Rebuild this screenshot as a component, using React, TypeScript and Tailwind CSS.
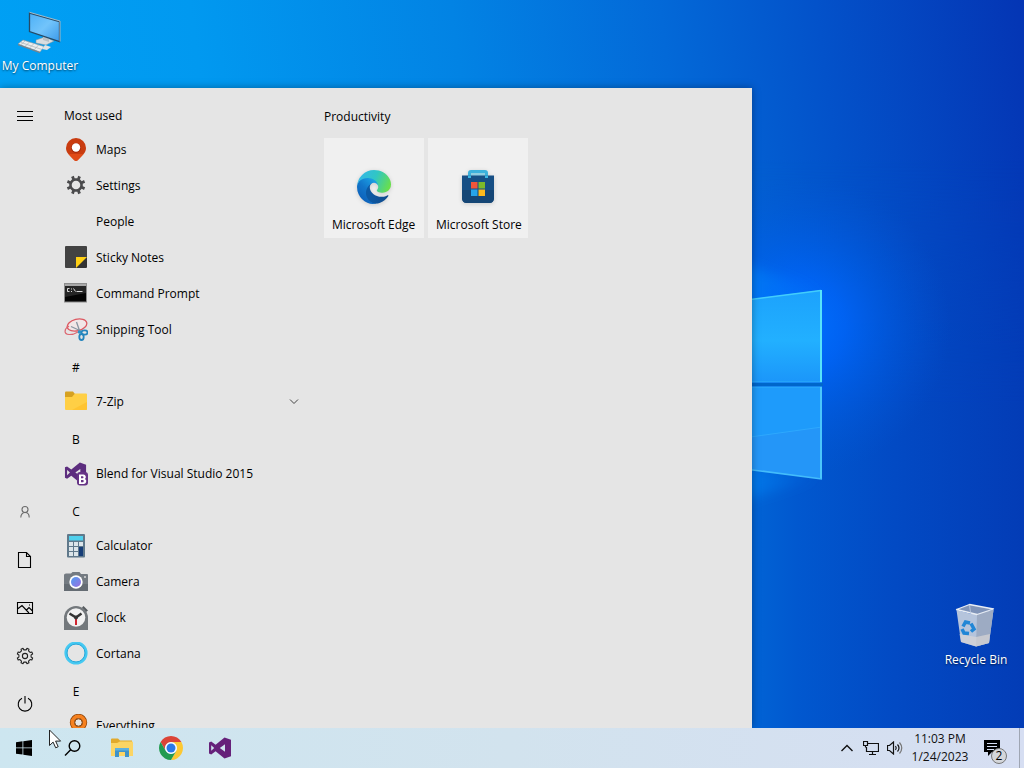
import type { ReactNode } from 'react';

/* ---------- helpers ---------- */

function gearPath(cx: number, cy: number, outer: number, inner: number, teeth: number, tip: number, root: number) {
  const points: string[] = [];
  const step = (Math.PI * 2) / teeth;
  for (let i = 0; i < teeth; i++) {
    const a = i * step + step / 2;
    const corners: [number, number][] = [
      [a - step * root, inner],
      [a - step * tip, outer],
      [a + step * tip, outer],
      [a + step * root, inner],
    ];
    for (const [angle, r] of corners) {
      points.push(`${(cx + Math.cos(angle) * r).toFixed(2)} ${(cy + Math.sin(angle) * r).toFixed(2)}`);
    }
  }
  return `M${points.join('L')}Z`;
}

const VS_PATH =
  'M16.500 .5 23 3v18l-6.500 2.500L7.600 15.600 3.200 19 1 18V6l2.200-1L7.600 8.400Z M17 8 11.800 12l5.200 4Z M3.200 9v6L6.200 12Z';

/* ---------- wallpaper ---------- */

function Wallpaper() {
  return (
    <svg
      className="absolute inset-0 size-full"
      viewBox="0 0 1024 768"
      preserveAspectRatio="xMaxYMin slice"
      aria-hidden="true"
    >
      <defs>
        <linearGradient id="sky" gradientUnits="userSpaceOnUse" x1="0" y1="140" x2="1024" y2="0">
          <stop offset="0" stopColor="#00a0f4" />
          <stop offset="0.2" stopColor="#0199f0" />
          <stop offset="0.45" stopColor="#0283e4" />
          <stop offset="0.65" stopColor="#0369d8" />
          <stop offset="0.8" stopColor="#0352ca" />
          <stop offset="1" stopColor="#0435b4" />
        </linearGradient>
        <linearGradient id="lower" x1="0" y1="0" x2="1" y2="0">
          <stop offset="0" stopColor="#0170dc" />
          <stop offset="0.3" stopColor="#0158cf" />
          <stop offset="0.6" stopColor="#024ac4" />
          <stop offset="1" stopColor="#033cb6" />
        </linearGradient>
        <linearGradient id="lowerFade" x1="0" y1="0" x2="0" y2="1">
          <stop offset="0" stopColor="#fff" stopOpacity="0" />
          <stop offset="0.4" stopColor="#fff" />
        </linearGradient>
        <mask id="lowerMask">
          <rect x="700" y="160" width="324" height="608" fill="url(#lowerFade)" />
        </mask>
        <radialGradient id="glow" gradientUnits="userSpaceOnUse" cx="800" cy="325" r="150">
          <stop offset="0" stopColor="#0070ff" />
          <stop offset="0.3" stopColor="#0066fb" stopOpacity="0.8" />
          <stop offset="1" stopColor="#0058d8" stopOpacity="0" />
        </radialGradient>
        <linearGradient id="ray" x1="0" y1="0" x2="1" y2="0">
          <stop offset="0" stopColor="#0298fb" stopOpacity="0.8" />
          <stop offset="1" stopColor="#0080ff" stopOpacity="0" />
        </linearGradient>
        <linearGradient id="paneTop" x1="0" y1="0" x2="0" y2="1">
          <stop offset="0" stopColor="#1ca2fc" />
          <stop offset="0.55" stopColor="#22b0ff" />
          <stop offset="1" stopColor="#1b96fa" />
        </linearGradient>
        <filter id="soft">
          <feGaussianBlur stdDeviation="6" />
        </filter>
      </defs>
      <rect width="1024" height="768" fill="url(#sky)" />
      <rect x="700" y="160" width="324" height="608" fill="url(#lower)" mask="url(#lowerMask)" />
      <rect x="640" y="165" width="330" height="330" fill="url(#glow)" />
      <path d="M700 250 822 290 822 300 700 310Z" fill="url(#ray)" filter="url(#soft)" />
      <path d="M700 455 822 478 700 512Z" fill="url(#ray)" filter="url(#soft)" />
      <path d="M700 306 822 290V382H700Z" fill="url(#paneTop)" />
      <path d="M700 387H822V479L700 463Z" fill="#1e9bfb" />
      <path d="M700 444 822 427V479L700 463Z" fill="#2496f8" />
      <path d="M700 444 822 427" stroke="#2ea8fd" strokeWidth="1" />
      <path d="M700 382H822M700 387H822" stroke="#2fb0fb" strokeWidth="1" />
      <rect x="700" y="383" width="123" height="3" fill="#0066cb" />
      <path d="M700 306 821 290.500" fill="none" stroke="#42cdfb" strokeWidth="1.500" />
      <path d="M821 290V382" stroke="#57e3fa" strokeWidth="2" />
      <path d="M821 387V479" stroke="#4bc6fb" strokeWidth="2" />
      <path d="M700 463 822 479" stroke="#43bcfb" strokeWidth="1.500" />
    </svg>
  );
}

/* ---------- application icons (24 × 24) ---------- */

function AppIcon({ children }: { children: ReactNode }) {
  return (
    <svg width="24" height="24" viewBox="0 0 24 24" aria-hidden="true">
      {children}
    </svg>
  );
}

const MapsIcon = () => (
  <AppIcon>
    <path d="M12 0a10 10 0 0 0-10 10c0 5 3.500 7 8.300 12.200q1.700 1.600 3.400 0C18.500 17 22 15 22 10A10 10 0 0 0 12 0Z" fill="#c93c10" />
    <path d="M4.500 16c1.500 2 3.500 3.700 5.800 6.200q1.700 1.600 3.400 0c2.300-2.500 4.300-4.200 5.800-6.200Z" fill="#e04b18" />
    <circle cx="12" cy="10" r="5" fill="#a92c0c" />
    <circle cx="12" cy="9.500" r="4.200" fill="#fff" />
  </AppIcon>
);

const SettingsAppIcon = () => (
  <AppIcon>
    <path
      fillRule="evenodd"
      d={`${gearPath(12, 11, 9.4, 6.9, 8, 0.2, 0.25)}M12 6.700a4.300 4.300 0 1 0 0 8.600a4.300 4.300 0 1 0 0-8.600Z`}
      fill="#4a4a4c"
    />
  </AppIcon>
);

const StickyNotesIcon = () => (
  <AppIcon>
    <path d="M2 0h20q1 0 1 1v10L12 22H2q-1 0-1-1V1q0-1 1-1Z" fill="#424242" />
    <path d="M12 11h11v10q0 1-1 1H12Z" fill="#333" />
    <path d="M12 11h11L12 22Z" fill="#ffd014" />
  </AppIcon>
);

const CommandPromptIcon = () => (
  <AppIcon>
    <rect x="0.500" y="1.500" width="22" height="18.500" fill="#050505" stroke="#8d8d8d" />
    <rect x="1" y="2" width="21" height="2" fill="#a9a9a9" />
    <path d="M1 4h21v7L1 15Z" fill="#262626" />
    <path d="M5.500 6.500H3.500v3h2M7.500 6.500v1M7.500 9v1M9.500 6.500l2 3M12.500 9.500h6" fill="none" stroke="#eee" strokeWidth="0.900" />
  </AppIcon>
);

const SnippingToolIcon = () => (
  <AppIcon>
    <ellipse cx="13" cy="7" rx="10" ry="5.800" transform="rotate(-14 13 7)" fill="#f1e6e7" stroke="#dc5861" strokeWidth="1.300" />
    <path d="M5 8c-5 3-5.500 8 0 8.500 3 .2 6-.8 9-2.600" fill="none" stroke="#dc6670" strokeWidth="1.200" />
    <path d="M12.500 4 16 14M7 8.500l11 5" stroke="#8995a2" strokeWidth="1.300" />
    <ellipse cx="20.500" cy="14.500" rx="3" ry="2.200" fill="none" stroke="#2585bd" strokeWidth="1.800" />
    <ellipse cx="17.500" cy="19" rx="2.200" ry="3" fill="none" stroke="#2585bd" strokeWidth="1.800" />
    <circle cx="15.500" cy="14" r="1.800" fill="#2a93c9" />
  </AppIcon>
);

const FolderIcon = () => (
  <AppIcon>
    <path d="M1 2.500q0-1 1-1h7l2 2.500v4H1Z" fill="#d6a121" />
    <path d="M11 3.500h11q1 0 1 1V19q0 1-1 1H2q-1 0-1-1V7h7Z" fill="#ffcf45" />
    <path d="M23 12v7q0 1-1 1H8Z" fill="#ffc431" />
  </AppIcon>
);

const BlendIcon = () => (
  <AppIcon>
    <g transform="translate(0 0) scale(.96 .88)">
      <path fillRule="evenodd" d={VS_PATH} fill="#5c2d7e" />
    </g>
    <rect x="13" y="10" width="11" height="13.500" rx="3" fill="#663486" />
    <path fillRule="evenodd" d="M15 12.500h4.500a2.600 2.600 0 0 1 1.500 4.500 2.700 2.700 0 0 1-1.500 5H15ZM17 14.200v2h2q1.200-1 0-2ZM17 18v2.200h2.200q1.300-1.100 0-2.200Z" fill="#fff" />
  </AppIcon>
);

const CalculatorIcon = () => (
  <AppIcon>
    <rect x="3" y="0" width="18" height="23.500" rx="1" fill="#60798b" />
    <rect x="5" y="2" width="14" height="4.500" fill="#4fd0ed" />
    {[8, 13, 18].map((y) => (
      <g key={y} fill="#dce5ea">
        <rect x="5" y={y} width="4" height="4" />
        <rect x="10" y={y} width="4" height="4" />
      </g>
    ))}
    <rect x="15" y="8" width="4" height="4" fill="#dce5ea" />
    <rect x="15" y="13" width="4" height="9" fill="#163d77" />
  </AppIcon>
);

const CameraIcon = () => (
  <AppIcon>
    <defs>
      <linearGradient id="lens" x1="0" y1="0" x2="1" y2="1">
        <stop offset="0" stopColor="#4f9ef2" />
        <stop offset="1" stopColor="#9c6fe0" />
      </linearGradient>
    </defs>
    <path d="M2 3.500h5L8.500 2h7L17 4h6q1 0 1 1v16H0V5q0-1.500 2-1.500Z" fill="#747b82" />
    <path d="M0 14h24v7H0Z" fill="#656c73" />
    <circle cx="12" cy="12" r="6.700" fill="#fff" />
    <circle cx="12" cy="12" r="5" fill="url(#lens)" />
    <circle cx="21" cy="7" r="1" fill="#dadada" />
  </AppIcon>
);

const ClockIcon = () => (
  <AppIcon>
    <path d="m18 1.500 1.500-1.500L24 4.500 22 6Z" fill="#555a5e" />
    <path d="M12 0a12 12 0 0 0-12 12v12h24V12A12 12 0 0 0 12 0Z" fill="#73787c" />
    <circle cx="12" cy="11.500" r="9.300" fill="#f1f1f1" />
    <path d="m5.500 7.500 6.500 4 5.500-4" fill="none" stroke="#333" strokeWidth="2.500" />
    <path d="M12 12v7" stroke="#cf2430" strokeWidth="2" />
    <circle cx="12" cy="11.500" r="2" fill="#333" />
  </AppIcon>
);

const CortanaIcon = () => (
  <AppIcon>
    <circle cx="12" cy="11" r="10.200" fill="none" stroke="#45c9f2" strokeWidth="2.800" />
    <circle cx="12" cy="11" r="9" fill="none" stroke="#2ba7d8" strokeWidth="1" />
  </AppIcon>
);

const EverythingIcon = () => (
  <AppIcon>
    <circle cx="14.500" cy="8.500" r="6.200" fill="none" stroke="#8f480e" strokeWidth="5" />
    <circle cx="14.500" cy="8.500" r="6.200" fill="none" stroke="#f6811f" strokeWidth="3.500" />
    <circle cx="14.500" cy="8.500" r="3.700" fill="#e5e5e5" stroke="#8f480e" />
    <path d="m9 14.500-7 7" stroke="#f6811f" strokeWidth="4" />
  </AppIcon>
);

const EdgeIcon = () => (
  <svg className="drop-shadow-sm" width="34" height="34" viewBox="0 0 256 256" aria-hidden="true">
    <defs>
      <linearGradient id="edgeA" x1="0.200" y1="0.700" x2="1" y2="0.700">
        <stop offset="0" stopColor="#0c59a4" />
        <stop offset="1" stopColor="#114a8b" />
      </linearGradient>
      <linearGradient id="edgeB" x1="0.800" y1="0.200" x2="0.300" y2="0.900">
        <stop offset="0" stopColor="#1b9de2" />
        <stop offset="0.500" stopColor="#1276ca" />
        <stop offset="1" stopColor="#0d62bb" />
      </linearGradient>
      <linearGradient id="edgeC" x1="0" y1="0.300" x2="1" y2="0.600">
        <stop offset="0" stopColor="#35b7e8" />
        <stop offset="0.500" stopColor="#30c6c5" />
        <stop offset="1" stopColor="#6adf4b" />
      </linearGradient>
    </defs>
    <path fill="url(#edgeA)" d="M231 190.500c-3.400 1.800-6.900 3.400-10.500 4.700a101.500 101.500 0 0 1-35.900 6.500c-47.300 0-88.500-32.500-88.500-74.300a31.500 31.500 0 0 1 16.400-27.300c-42.800 1.800-53.800 46.400-53.800 72.500 0 74 68.100 81.400 82.800 81.400 7.900 0 19.800-2.300 27-4.600l1.300-.4a128.300 128.300 0 0 0 66.600-52.800 4 4 0 0 0-5.400-5.700z" />
    <path fill="url(#edgeB)" d="M105.700 241.400a79.200 79.200 0 0 1-22.700-21.300 80.700 80.700 0 0 1 29.500-120c3.200-1.500 8.500-4.100 15.600-4a32.400 32.400 0 0 1 25.700 13 31.900 31.900 0 0 1 6.300 18.700c0-.2 24.500-79.600-80-79.600-43.900 0-80 41.600-80 78.200a130.200 130.200 0 0 0 12.100 56 128 128 0 0 0 156.400 67 75.500 75.500 0 0 1-62.800-8z" />
    <path fill="url(#edgeC)" d="M152.300 148.900c-.8 1-3.300 2.500-3.300 5.700 0 2.600 1.700 5.100 4.700 7.200 14.400 10 41.500 8.700 41.600 8.700a59.600 59.600 0 0 0 30.300-8.300 61.400 61.400 0 0 0 30.400-52.900c.3-22.400-8-37.300-11.300-43.900C223.500 23.900 177.700 0 128 0A128 128 0 0 0 0 126.200c.5-36.500 36.800-66 80-66 3.500 0 23.500.3 42 10 16.300 8.600 24.900 18.900 30.800 29.200 6.200 10.700 7.300 24.100 7.300 29.500s-2.700 13.300-7.800 20z" />
  </svg>
);

const StoreIcon = () => (
  <svg className="drop-shadow-sm" width="34" height="34" viewBox="0 0 34 34" aria-hidden="true">
    <path d="M8.500 8V3q0-1.500 1.500-1.500h14q1.500 0 1.500 1.500v5" fill="#8fcde0" stroke="#3cb1dc" strokeWidth="3" />
    <path d="M1 5.500h32V28q0 5-5 5H6q-5 0-5-5Z" fill="#174f85" />
    <path d="M1 20h32v8q0 5-5 5H6q-5 0-5-5Z" fill="#154675" />
    <path d="M7 5.500h3V8H7ZM24 5.500h3V8h-3Z" fill="#3cb6e3" />
    <path d="M10 12h6.500v6.500H10Z" fill="#f1553a" />
    <path d="M17.500 12H24v6.500h-6.500Z" fill="#7dba2a" />
    <path d="M10 19.500h6.500V26H10Z" fill="#27a5ea" />
    <path d="M17.500 19.500H24V26h-6.500Z" fill="#fcb91c" />
  </svg>
);

/* ---------- rail icons (18 × 18, thin strokes) ---------- */

function RailIcon({ children }: { children: ReactNode }) {
  return (
    <svg width="18" height="18" viewBox="0 0 18 18" fill="none" stroke="currentColor" strokeWidth="1.100" aria-hidden="true">
      {children}
    </svg>
  );
}

const rail: { label: string; tone: string; icon: ReactNode }[] = [
  {
    label: 'Account',
    tone: 'text-[#6b6b6b]',
    icon: (
      <RailIcon>
        <circle cx="9" cy="6.500" r="3" />
        <path d="M4.800 14.500c0-3 1.800-5 4.200-5s4.200 2 4.200 5" />
      </RailIcon>
    ),
  },
  {
    label: 'Documents',
    tone: 'text-black',
    icon: (
      <RailIcon>
        <path d="M2.500 1.500h8l4 4v11h-12ZM10.500 1.500v4h4" />
      </RailIcon>
    ),
  },
  {
    label: 'Pictures',
    tone: 'text-black',
    icon: (
      <RailIcon>
        <path d="M1.500 3.500h15v11h-15ZM1.500 10 6 6.500l7 7.500M10.500 11l2.500-2.500 3.500 3.500" />
        <path d="M13 6h1" />
      </RailIcon>
    ),
  },
  {
    label: 'Settings',
    tone: 'text-[#222]',
    icon: (
      <RailIcon>
        <path d={gearPath(9, 9, 7.9, 6.2, 8, 0.17, 0.27)} strokeLinejoin="round" />
        <circle cx="9" cy="9" r="2.600" />
      </RailIcon>
    ),
  },
  {
    label: 'Power',
    tone: 'text-black',
    icon: (
      <RailIcon>
        <path d="M6 3.200a6.800 6.800 0 1 0 6 0M9 1v7.500" />
      </RailIcon>
    ),
  },
];

/* ---------- start menu ---------- */

type Entry = { name: string; icon?: ReactNode; expandable?: boolean };

const groups: { title: string; letter: boolean; items: Entry[] }[] = [
  {
    title: 'Most used',
    letter: false,
    items: [
      { name: 'Maps', icon: <MapsIcon /> },
      { name: 'Settings', icon: <SettingsAppIcon /> },
      { name: 'People' },
      { name: 'Sticky Notes', icon: <StickyNotesIcon /> },
      { name: 'Command Prompt', icon: <CommandPromptIcon /> },
      { name: 'Snipping Tool', icon: <SnippingToolIcon /> },
    ],
  },
  { title: '#', letter: true, items: [{ name: '7-Zip', icon: <FolderIcon />, expandable: true }] },
  { title: 'B', letter: true, items: [{ name: 'Blend for Visual Studio 2015', icon: <BlendIcon /> }] },
  {
    title: 'C',
    letter: true,
    items: [
      { name: 'Calculator', icon: <CalculatorIcon /> },
      { name: 'Camera', icon: <CameraIcon /> },
      { name: 'Clock', icon: <ClockIcon /> },
      { name: 'Cortana', icon: <CortanaIcon /> },
    ],
  },
  { title: 'E', letter: true, items: [{ name: 'Everything', icon: <EverythingIcon /> }] },
];

const tiles = [
  { name: 'Microsoft Edge', icon: <EdgeIcon /> },
  { name: 'Microsoft Store', icon: <StoreIcon /> },
];

function StartMenu() {
  return (
    <section aria-label="Start" className="flex min-h-0 w-[752px] shrink-0 bg-[#e5e5e5] shadow-[0_0_8px_rgba(0,0,0,0.35)]">
      <nav className="flex w-[50px] shrink-0 flex-col pt-1">
        <button aria-label="Expand" className="flex h-12 shrink-0 items-center justify-center">
          <svg width="16" height="12" viewBox="0 0 16 12" stroke="#000" aria-hidden="true">
            <path d="M0 1.500h16M0 6.500h16M0 10.500h16" />
          </svg>
        </button>
        <div className="mt-auto flex flex-col">
          {rail.map((r) => (
            <button key={r.label} aria-label={r.label} className={`flex h-12 items-center justify-center ${r.tone}`}>
              {r.icon}
            </button>
          ))}
        </div>
      </nav>
      <div className="w-[260px] shrink-0 overflow-hidden pt-2 pl-3.5">
        {groups.map((g) => (
          <section key={g.title}>
            <h2 className={`flex h-9 items-center pt-1 ${g.letter ? 'w-6 justify-center' : ''}`}>{g.title}</h2>
            <ul>
              {g.items.map((item) => (
                <li key={item.name}>
                  <button className="flex h-9 w-full items-center gap-2 pr-2 text-left">
                    <span className="size-6 shrink-0">{item.icon}</span>
                    <span className="flex-1">{item.name}</span>
                    {item.expandable && (
                      <svg width="16" height="8" viewBox="0 0 16 8" fill="none" stroke="#444" aria-hidden="true">
                        <path d="m4 1.500 4 4 4-4" />
                      </svg>
                    )}
                  </button>
                </li>
              ))}
            </ul>
          </section>
        ))}
      </div>
      <div className="flex-1 pt-5 pl-3.5">
        <h2 className="leading-[18px]">Productivity</h2>
        <div className="mt-3 flex flex-wrap gap-1">
          {tiles.map((t) => (
            <button key={t.name} className="flex size-[100px] flex-col bg-[#f0f0f0] px-2 pb-1 text-left">
              <span className="flex w-full flex-1 items-end justify-center pb-3">{t.icon}</span>
              <span className="leading-[18px] whitespace-nowrap">{t.name}</span>
            </button>
          ))}
        </div>
      </div>
    </section>
  );
}

/* ---------- desktop icons ---------- */

const ComputerIcon = () => (
  <svg width="48" height="48" viewBox="0 0 48 48" aria-hidden="true">
    <defs>
      <linearGradient id="screen" x1="0" y1="0" x2="1" y2="1">
        <stop offset="0" stopColor="#4cb0f7" />
        <stop offset="0.500" stopColor="#72c4fb" />
        <stop offset="1" stopColor="#3b9aea" />
      </linearGradient>
    </defs>
    <path d="m20 32 9-3 9 4-8 4-10-2Z" fill="#d9dde0" stroke="#8b9499" strokeWidth="0.500" />
    <path d="m27 27 6 2v5l-6-2Z" fill="#b8c0c5" />
    <path d="m13.500 5 30 8.500v20L13.500 23.500Z" fill="url(#screen)" stroke="#264a66" strokeWidth="1.300" />
    <path d="m13.500 4.300 30.500 8.700v20.500" fill="none" stroke="#c6d2d8" strokeWidth="0.800" />
    <path d="m7 32 21 6.500L24 44 2 36Z" fill="#eceeef" stroke="#89939a" strokeWidth="0.600" />
    <path d="m5 34.500 21 7M9 33l-4.500 4M13.500 34l-4.500 4.500M18 35.500 13.500 40M22.500 37 18 42" stroke="#a9b1b6" strokeWidth="0.700" />
    <path d="m2 36 22 8v1.200L2 37.200Z" fill="#7a838a" />
    <path d="m29 37 6 2-4 3-5-1Z" fill="#dfe3e5" />
  </svg>
);

const RecycleBinIcon = () => (
  <svg width="48" height="48" viewBox="0 0 48 48" aria-hidden="true">
    <path d="m4.500 8 15 4 22-4-4.500 33-13 3.500L9 40Z" fill="#bfcbdd" fillOpacity="0.950" />
    <path d="m25 12 16.500-4-4.500 33-13 3.500Z" fill="#9dabc3" />
    <path d="m7.500 32 16.500 3 14-3-1 9-13 3.500L9 40Z" fill="#d9d6d5" fillOpacity="0.700" />
    <path d="m4.500 7.500 13-5 24 4.500-16.500 5.500Z" fill="#8094b8" stroke="#e8edf4" strokeWidth="1.300" strokeLinejoin="round" />
    <path d="m17.500 3 1 7.500" stroke="#b5c3da" />
    <g fill="none" stroke="#2186d6" strokeWidth="3.500">
      <path d="m11 24.500 2.500-4.500 4.500 1" />
      <path d="m19 21.500 3 5.500-3 2.500" />
      <path d="m17 31.500-5-.500-2-4" />
    </g>
  </svg>
);

function DesktopIcon({ label, children }: { label: string; children: ReactNode }) {
  return (
    <button className="flex w-20 flex-col items-center text-white [text-shadow:0_1px_2px_rgba(0,0,0,0.6)]">
      {children}
      <span className="pt-px leading-[18px] whitespace-nowrap">{label}</span>
    </button>
  );
}

/* ---------- taskbar ---------- */

const pinned: { label: string; icon: ReactNode }[] = [
  {
    label: 'Start',
    icon: (
      <svg width="16" height="16" viewBox="0 0 16 16" aria-hidden="true">
        <path d="m0 2.200 6.500-.9v6.200H0ZM7.300 1.200 16 0v7.500H7.300ZM0 8.300h6.500v6.300L0 13.700ZM7.300 8.300H16V16l-8.700-1.200Z" />
      </svg>
    ),
  },
  {
    label: 'Search',
    icon: (
      <svg width="18" height="18" viewBox="0 0 18 18" fill="none" stroke="#000" strokeWidth="1.400" aria-hidden="true">
        <circle cx="10.500" cy="7" r="5.300" />
        <path d="M6.700 10.800 1 16.500" />
      </svg>
    ),
  },
  {
    label: 'File Explorer',
    icon: (
      <svg width="24" height="20" viewBox="0 0 24 20" aria-hidden="true">
        <path d="M1 1.500q0-1 1-1h6l2 2h12v14H1Z" fill="#e2aa2c" />
        <path d="M1 5h6l3-1.500h12q1 0 1 1V18H1Z" fill="#fcd564" />
        <path d="M5 10h14v9h-4V14H9v5H5Z" fill="#3f93c9" />
        <path d="M5 10h14v2.500H5Z" fill="#5fb1de" />
      </svg>
    ),
  },
  {
    label: 'Google Chrome',
    icon: (
      <svg width="24" height="24" viewBox="0 0 24 24" aria-hidden="true">
        <path d="M1.610 6A12 12 0 0 1 22.390 6H12a6 6 0 0 0-5.200 9Z" fill="#db4437" />
        <path d="M22.390 6A12 12 0 0 1 12 24L17.200 15A6 6 0 0 0 12 6Z" fill="#fdc832" />
        <path d="M1.610 6A12 12 0 0 0 12 24L17.200 15A6 6 0 0 1 6.800 15Z" fill="#229b50" />
        <circle cx="12" cy="12" r="5.800" fill="#fff" />
        <circle cx="12" cy="12" r="4.500" fill="#2a79e8" />
      </svg>
    ),
  },
  {
    label: 'Visual Studio',
    icon: (
      <svg width="24" height="22" viewBox="0 0 24 24" preserveAspectRatio="none" aria-hidden="true">
        <path fillRule="evenodd" d={VS_PATH} fill="#66217a" />
      </svg>
    ),
  },
];

function Taskbar() {
  return (
    <footer className="relative flex h-10 shrink-0 justify-between bg-linear-to-r from-[#cde6f0] via-[#d2e3ee] to-[#d6def2]">
      <div className="flex">
        {pinned.map((p) => (
          <button
            key={p.label}
            aria-label={p.label}
            className="flex w-12 items-center justify-center not-first:w-[49px]"
          >
            {p.icon}
          </button>
        ))}
      </div>
      <div className="flex items-stretch">
        <button aria-label="Show hidden icons" className="flex w-6 items-center justify-center">
          <svg width="14" height="8" viewBox="0 0 14 8" fill="none" stroke="#111" strokeWidth="1.400" aria-hidden="true">
            <path d="m1.500 7 5.500-5.500L12.500 7" />
          </svg>
        </button>
        <button aria-label="Network" className="flex w-6 items-center justify-center">
          <svg width="16" height="14" viewBox="0 0 16 14" fill="none" stroke="#111" strokeWidth="1.200" aria-hidden="true">
            <path d="M5 2.500h10.500v8H3.500V6M9.500 10.500v3M6 13.500h7" />
            <path d="M.5.500h4v4h-4ZM2.500 4.500v2" />
          </svg>
        </button>
        <button aria-label="Volume" className="flex w-6 items-center justify-center">
          <svg width="16" height="14" viewBox="0 0 16 14" fill="none" stroke="#111" strokeWidth="1.200" aria-hidden="true">
            <path d="M.5 4.500h2l4-3.500v12l-4-3.500h-2Z" />
            <path d="M8.500 5q1.500 2 0 4M10.500 3.500q3 3.500 0 7" />
            <path d="M12.500 1.500q4.500 5.500 0 11" stroke="#777" />
          </svg>
        </button>
        <button className="flex w-[66px] flex-col justify-center text-center leading-[18px] text-[#111]">
          <span>11:03 PM</span>
          <span>1/24/2023</span>
        </button>
        <button aria-label="2 new notifications" className="relative flex w-[46px] items-center justify-center pr-2">
          <svg width="16" height="17" viewBox="0 0 16 17" aria-hidden="true">
            <path d="M0 0h16v12H8l-4 4v-4H0Z" fill="#000" />
            <path d="M3 3.500h10M3 6.500h10M3 9.500h7" stroke="#d6def2" />
          </svg>
          <span className="absolute right-3 bottom-1 flex size-4 items-center justify-center rounded-full border border-[#777] bg-[#d4d6da] leading-none text-black">
            2
          </span>
        </button>
        <button aria-label="Show desktop" className="w-[5px] border-l border-[#9fa6b3]" />
      </div>
      <svg className="absolute top-px left-[49px]" width="14" height="20" viewBox="0 0 14 20" aria-hidden="true">
        <path d="M.5 1v15.500l3.600-3.400 2.600 5.700 2.500-1.100-2.600-5.600h5Z" fill="#fff" stroke="#222" />
      </svg>
    </footer>
  );
}

export default function App() {
  return (
    <div className="flex h-screen flex-col overflow-hidden bg-[#0350c8] font-['Open_Sans','Noto_Sans',sans-serif] text-[12px] text-black select-none">
      <main className="relative flex min-h-0 flex-1 flex-col">
        <Wallpaper />
        <div className="relative flex h-[88px] shrink-0 items-start pt-2">
          <DesktopIcon label="My Computer">
            <ComputerIcon />
          </DesktopIcon>
        </div>
        <div className="relative flex min-h-0 flex-1">
          <StartMenu />
          <div className="flex flex-1 items-end justify-end pr-2 pb-[59px]">
            <DesktopIcon label="Recycle Bin">
              <RecycleBinIcon />
            </DesktopIcon>
          </div>
        </div>
      </main>
      <Taskbar />
    </div>
  );
}
